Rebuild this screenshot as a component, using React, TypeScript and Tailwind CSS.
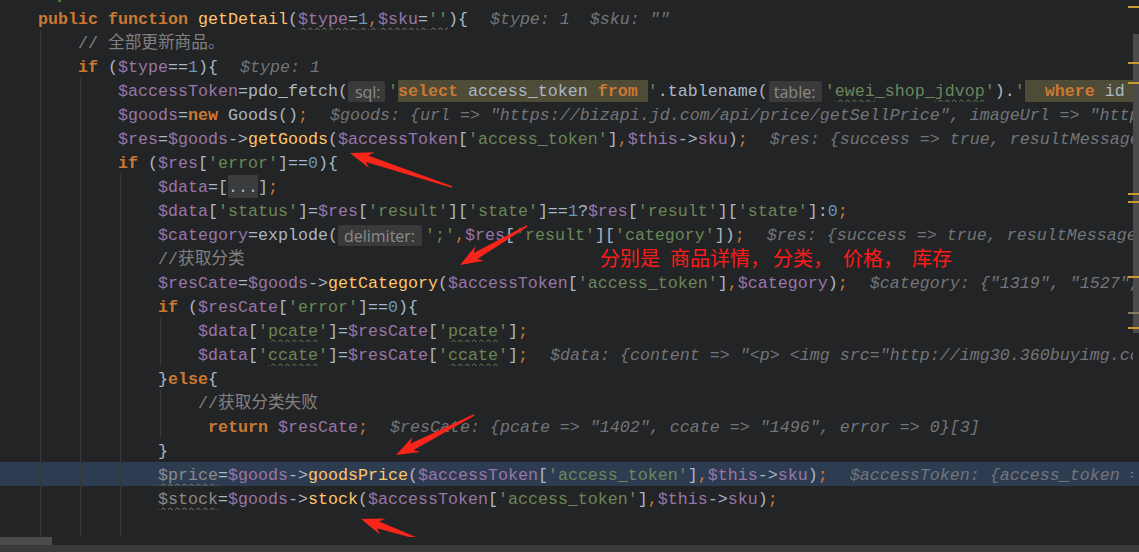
import React from 'react';

type Kids = { children?: React.ReactNode };

const K = ({ children }: Kids) => <span className="font-bold text-[#cc7832]">{children}</span>;
const V = ({ children }: Kids) => <span className="text-[#9876aa]">{children}</span>;
const S = ({ children }: Kids) => <span className="text-[#6a8759]">{children}</span>;
const N = ({ children }: Kids) => <span className="text-[#6897bb]">{children}</span>;
const F = ({ children }: Kids) => <span className="text-[#ffc66d]">{children}</span>;
const P = ({ children }: Kids) => <span className="text-[#cc7832]">{children}</span>;
const Cm = ({ children }: Kids) => <span className="text-[#808080]">{children}</span>;
const Dbg = ({ children }: Kids) => <span className="ml-[22px] italic text-[#72757a]">{children}</span>;

const LB = '{';
const RB = '}';

// unused / typo squiggles
const Wave = ({ children }: Kids) => (
  <span className="underline decoration-wavy decoration-[#5f7f4d] decoration-1 underline-offset-[3px]">{children}</span>
);
const WaveGray = ({ children }: Kids) => (
  <span className="underline decoration-wavy decoration-[#7d7963] decoration-1 underline-offset-[3px]">{children}</span>
);

// parameter hint chip
const Hint = ({ children, w, pl }: Kids & { w: string; pl: string }) => (
  <span
    className={`inline-block align-top mt-[3px] h-[22px] leading-[22px] rounded-[3px] bg-[#3a3a3a] mr-[3px] font-['Open_Sans',sans-serif] text-[16px] not-italic text-[#8b8b8b] ${pl} ${w}`}
  >
    {children}
  </span>
);

// injected sql fragment
const Sql = ({ children }: Kids) => (
  <span className="inline-block align-top mt-[2px] h-[23px] leading-[23px] bg-[#4e4b36]">{children}</span>
);

const Line = ({ pad, active, children }: Kids & { pad: string; active?: boolean }) => (
  <div className={`h-[24px] ${active ? 'bg-[#2e3c52]' : ''}`}>
    <div className={`h-full w-[1133px] overflow-hidden whitespace-pre leading-[27px] ${pad}`}>{children}</div>
  </div>
);

const arrows: [number, number, number, number][] = [
  [452, 187, 350, 153],
  [527, 226, 460, 265],
  [474, 415, 396, 455],
  [416, 538, 361, 519],
];

function arrowPoints(x1: number, y1: number, x2: number, y2: number) {
  const dx = x2 - x1;
  const dy = y2 - y1;
  const L = Math.hypot(dx, dy);
  const ux = dx / L;
  const uy = dy / L;
  const pt = (u: number, v: number) =>
    `${(x1 + ux * u - uy * v).toFixed(1)},${(y1 + uy * u + ux * v).toFixed(1)}`;
  return [pt(0, -0.8), pt(L - 18, -3.5), pt(L - 23, -8.5), pt(L, 0), pt(L - 23, 8.5), pt(L - 18, 3.5), pt(0, 0.8)].join(' ');
}

const marks = [
  { y: 'top-[6px]', c: 'bg-[#c99a2e]' },
  { y: 'top-[62px]', c: 'bg-[#c99a2e]' },
  { y: 'top-[82px]', c: 'bg-[#c99a2e]' },
  { y: 'top-[193px]', c: 'bg-[#c99a2e]' },
  { y: 'top-[201px]', c: 'bg-[#c99a2e]' },
  { y: 'top-[276px]', c: 'bg-[#c99a2e]' },
  { y: 'top-[312px]', c: 'bg-[#857b63]' },
  { y: 'top-[327px]', c: 'bg-[#c99a2e]' },
];

export default function App() {
  return (
    <div className="w-[1139px] h-[552px] overflow-hidden bg-[#232425] flex flex-col">
      <div className="relative h-[537px] overflow-hidden text-[16.67px] text-[#a9b7c6] font-['Liberation_Mono','Noto_Sans_CJK_SC',monospace]">
        <div className="pt-[6px]">
          <Line pad="pl-[38px]">
            <K>public</K> <K>function</K> <F>getDetail</F>(<WaveGray><V>$type</V>=<N>1</N><P>,</P><V>$sku</V>=<S>''</S></WaveGray>){LB}<Dbg>{'$type: 1  $sku: ""'}</Dbg>
          </Line>
          <Line pad="pl-[78px]">
            <Cm>{'// 全部更新商品。'}</Cm>
          </Line>
          <Line pad="pl-[78px]">
            <K>if</K> (<V>$type</V>==<N>1</N>){LB}<Dbg>$type: 1</Dbg>
          </Line>
          <Line pad="pl-[118px]">
            <V>$accessToken</V>=pdo_fetch(<Hint w="w-[37px]" pl="pl-[7px]">sql:</Hint><S>'</S>
            <Sql><K>select</K> access_token <K>from</K> </Sql>
            <S>'</S>.tablename(<span className="ml-[1px]" />
            <Hint w="w-[53px]" pl="pl-[5px]">table:</Hint>
            <S>'<Wave>ewei</Wave>_shop_<Wave>jdvop</Wave>'</S>).<S>'</S>
            <Sql>{'  '}<K>where</K>{' id = "{$id}" limit 1 '}</Sql>
          </Line>
          <Line pad="pl-[118px]">
            <V>$goods</V>=<K>new</K> Goods()<P>;</P>
            <Dbg>{'$goods: {url => "https://bizapi.jd.com/api/price/getSellPrice", imageUrl => "https://img13.360buyimg.com/"}'}</Dbg>
          </Line>
          <Line pad="pl-[118px]">
            <V>$res</V>=<V>$goods</V>-&gt;<F>getGoods</F>(<V>$accessToken</V>[<S>'access_token'</S>]<P>,</P><V>$this</V>-&gt;<V>sku</V>)<P>;</P>
            <Dbg>{'$res: {success => true, resultMessage => "", resultCode => "0000"}'}</Dbg>
          </Line>
          <Line pad="pl-[118px]">
            <K>if</K> (<V>$res</V>[<S>'error'</S>]==<N>0</N>){LB}
          </Line>
          <Line pad="pl-[158px]">
            <V>$data</V>=[<span className="inline-block align-top mt-[1px] h-[23px] leading-[25px] bg-[#3a3b3c]">...</span>]<P>;</P>
          </Line>
          <Line pad="pl-[158px]">
            <V>$data</V>[<S>'status'</S>]=<V>$res</V>[<S>'result'</S>][<S>'state'</S>]==<N>1</N>?<V>$res</V>[<S>'result'</S>][<S>'state'</S>]:<N>0</N><P>;</P>
          </Line>
          <Line pad="pl-[158px]">
            <V>$category</V>=explode(<Hint w="w-[84px]" pl="pl-[6px]">delimiter:</Hint><S>';'</S><P>,</P><V>$res</V>[<S>'result'</S>][<S>'category'</S>])<P>;</P>
            <Dbg>{'$res: {success => true, resultMessage => "", resultCode => "0000"}'}</Dbg>
          </Line>
          <Line pad="pl-[158px]">
            <Cm>{'//获取分类'}</Cm>
          </Line>
          <Line pad="pl-[158px]">
            <V>$resCate</V>=<V>$goods</V>-&gt;<F>getCategory</F>(<V>$accessToken</V>[<S>'access_token'</S>]<P>,</P><V>$category</V>)<P>;</P>
            <Dbg>{'$category: {"1319", "1527", "1584"}'}</Dbg>
          </Line>
          <Line pad="pl-[158px]">
            <K>if</K> (<V>$resCate</V>[<S>'error'</S>]==<N>0</N>){LB}
          </Line>
          <Line pad="pl-[198px]">
            <V>$data</V>[<S>'<Wave>pcate</Wave>'</S>]=<V>$resCate</V>[<S>'<Wave>pcate</Wave>'</S>]<P>;</P>
          </Line>
          <Line pad="pl-[198px]">
            <V>$data</V>[<S>'<Wave>ccate</Wave>'</S>]=<V>$resCate</V>[<S>'<Wave>ccate</Wave>'</S>]<P>;</P>
            <Dbg>{'$data: {content => "<p> <img src="http://img30.360buyimg.com/jgsq-productsoa/"}'}</Dbg>
          </Line>
          <Line pad="pl-[158px]">
            {RB}<K>else</K>{LB}
          </Line>
          <Line pad="pl-[198px]">
            <Cm>{'//获取分类失败'}</Cm>
          </Line>
          <Line pad="pl-[208px]">
            <K>return</K> <V>$resCate</V><P>;</P>
            <Dbg>{'$resCate: {pcate => "1402", ccate => "1496", error => 0}[3]'}</Dbg>
          </Line>
          <Line pad="pl-[158px]">{RB}</Line>
          <Line pad="pl-[158px]" active>
            <WaveGray><span className="text-[#8a8a8a]">$price</span></WaveGray>=<V>$goods</V>-&gt;<F>goodsPrice</F>(<V>$accessToken</V>[<S>'access_token'</S>]<P>,</P><V>$this</V>-&gt;<V>sku</V>)<P>;</P>
            <Dbg>{'$accessToken: {access_token => "a1b2c3d4e5f6"}'}</Dbg>
          </Line>
          <Line pad="pl-[158px]">
            <WaveGray><span className="text-[#8a8a8a]">$stock</span></WaveGray>=<V>$goods</V>-&gt;<F>stock</F>(<V>$accessToken</V>[<S>'access_token'</S>]<P>,</P><V>$this</V>-&gt;<V>sku</V>)<P>;</P>
          </Line>
          <Line pad="pl-[158px]" />
        </div>

        {/* tail of the line above the viewport */}
        <div className="absolute left-[58px] top-0 w-[3px] h-[2px] bg-[#4f7a3c]" />

        {/* indent guides */}
        <div className="absolute left-[40px] top-[30px] bottom-0 w-px bg-[#383838]" />
        <div className="absolute left-[80px] top-[78px] bottom-0 w-px bg-[#383838]" />
        <div className="absolute left-[120px] top-[174px] bottom-0 w-px bg-[#383838]" />
        <div className="absolute left-[160px] top-[318px] h-[48px] w-px bg-[#383838]" />
        <div className="absolute left-[160px] top-[390px] h-[48px] w-px bg-[#383838]" />

        {/* error stripe + scrollbar */}
        <div className="absolute right-0 top-[34px] h-[299px] w-[6px] bg-[#4b4b4b]" />
        {marks.map((m, i) => (
          <div key={i} className={`absolute right-0 w-[11px] h-[2px] ${m.y} ${m.c}`} />
        ))}

        {/* annotation */}
        <div className="absolute left-[600px] top-[246px] h-[24px] flex items-center leading-[24px] whitespace-nowrap text-[20px] text-[#ff1a1a] font-['Noto_Sans_CJK_SC',sans-serif]">
          <span>分别是</span>
          <span className="ml-[10px]">商品详情，</span>
          <span className="ml-[3px]">分类，</span>
          <span className="ml-[10px]">价格，</span>
          <span className="ml-[9px]">库存</span>
        </div>
        <svg className="absolute inset-0 pointer-events-none" width="1139" height="537">
          {arrows.map((a, i) => (
            <polygon key={i} points={arrowPoints(a[0], a[1], a[2], a[3])} fill="#f8251b" />
          ))}
        </svg>
      </div>

      {/* horizontal scrollbar */}
      <div className="h-[8px] flex">
        <div className="w-[52px] h-full bg-[#4b4b4b]" />
      </div>
      <div className="flex-1 bg-[#3b3b3b]" />
    </div>
  );
}
